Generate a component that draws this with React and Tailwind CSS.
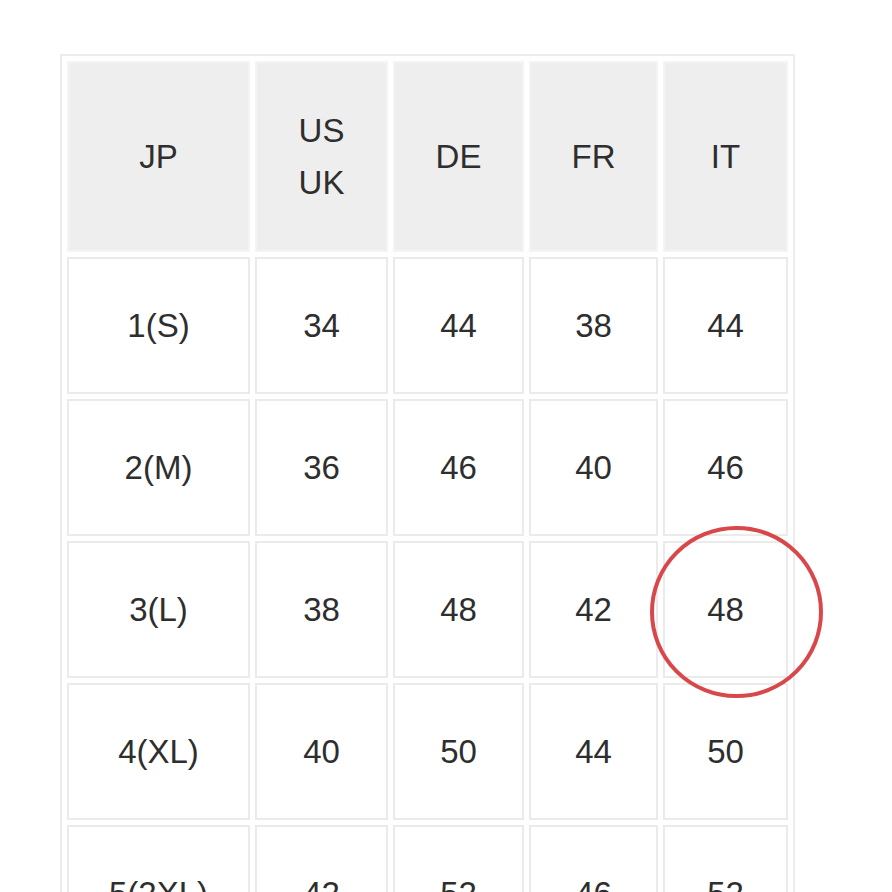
const headers = [["JP"], ["US", "UK"], ["DE"], ["FR"], ["IT"]];

const rows = [
  ["1(S)", "34", "44", "38", "44"],
  ["2(M)", "36", "46", "40", "46"],
  ["3(L)", "38", "48", "42", "48"],
  ["4(XL)", "40", "50", "44", "50"],
  ["5(2XL)", "42", "52", "46", "52"],
];

const widths = ["w-[183px]", "w-[133px]", "w-[131px]", "w-[129px]", "w-[125px]"];

export default function App() {
  return (
    <div className="min-h-[892px] bg-white pl-[60px] pt-[54px] font-['Liberation_Sans',Arial,sans-serif] text-[#2e2e2e]">
      <table className="border-separate border-spacing-[5px] border-2 border-[#ececec]">
        <thead>
          <tr>
            {headers.map((h, i) => (
              <th
                key={i}
                className={`${widths[i]} h-[191px] border-2 border-[#f4f4f4] bg-[#eeeeee] text-center align-middle text-[33px] font-normal leading-[52px]`}
              >
                {h.map((line, j) => (
                  <div key={j}>{line}</div>
                ))}
              </th>
            ))}
          </tr>
        </thead>
        <tbody>
          {rows.map((row, r) => (
            <tr key={r}>
              {row.map((cell, c) => (
                <td
                  key={c}
                  className={`relative h-[137px] border-2 border-[#ebebeb] bg-white text-center align-middle text-[33px] ${r === 2 && c === 4 ? "z-10" : ""}`}
                >
                  {cell}
                  {r === 2 && c === 4 && (
                    <span className="pointer-events-none absolute left-[-15px] top-[-17px] z-10 h-[172px] w-[173px] rounded-full border-[4px] border-[#d8484b]" />
                  )}
                </td>
              ))}
            </tr>
          ))}
        </tbody>
      </table>
    </div>
  );
}
